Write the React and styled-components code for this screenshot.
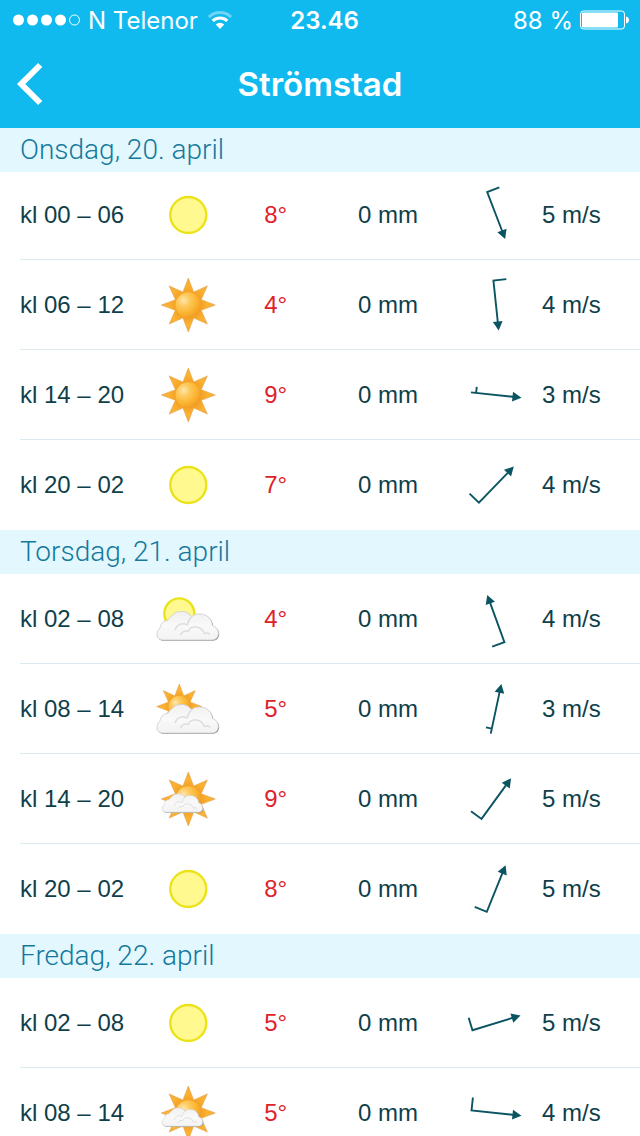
import React from 'react';
import styled, { createGlobalStyle } from 'styled-components';

const GlobalStyle = createGlobalStyle`
  html, body {
    margin: 0;
    background: #fff;
  }

  body {
    font-family: "Liberation Sans", Arial, sans-serif;
    color: #0f3f4a;
  }
`;

const Screen = styled.div`
  height: 100vh;
  display: flex;
  flex-direction: column;
`;

const Header = styled.header`
  flex: none;
  background: #10baef;
  color: #fff;
  font-family: Inter, sans-serif;
`;

const StatusBar = styled.div`
  display: grid;
  grid-template-columns: 45% 1fr auto;
  align-items: center;
  height: 40px;
  padding: 0 11px 0 13px;
  font-size: 24px;
  white-space: nowrap;
`;

const StatusGroup = styled.div`
  display: flex;
  align-items: center;
  gap: 7px;
  font-weight: ${({ $bold }) => ($bold ? 600 : 400)};
`;

const NavBar = styled.div`
  display: grid;
  grid-template-columns: 1fr auto 1fr;
  align-items: center;
  height: 88px;
`;

const BackButton = styled.button`
  justify-self: start;
  display: flex;
  padding: 16px;
  border: none;
  background: none;
  color: inherit;
  cursor: pointer;
`;

const Title = styled.h1`
  margin: 0;
  font-size: 33px;
  font-weight: 600;
`;

const Scroller = styled.main`
  flex: 1;
  min-height: 0;
  overflow-y: auto;
  scrollbar-width: none;
`;

/* the first day is tucked slightly under its sticky heading */
const DayList = styled.div`
  margin-top: -2px;
`;

const DayTitle = styled.h2`
  position: sticky;
  top: 0;
  z-index: 1;
  margin: 0;
  padding: 0 20px;
  background: #e3f7fe;
  color: #14799c;
  font-family: Roboto, sans-serif;
  font-size: 28px;
  font-weight: 300;
  line-height: 44px;
`;

const TableWrap = styled.div`
  padding-left: 20px;
`;

const Table = styled.table`
  width: 100%;
  table-layout: fixed;
  border-spacing: 0;
  font-size: 24px;
`;

const Col = styled.col`
  width: ${({ $width }) => $width};
`;

const Row = styled.tr`
  &:not(:last-child) > * {
    border-bottom: 1px solid #dce9ef;
  }
`;

const Cell = styled.td`
  box-sizing: border-box;
  height: 90px;
  padding: 0;
  color: ${({ $warm }) => ($warm ? '#e0222a' : 'inherit')};
  font-weight: normal;
  line-height: 30px;
  text-align: left;
  vertical-align: middle;
  white-space: nowrap;

  svg {
    display: block;
  }
`;

const SUN_POINTS = Array.from({ length: 16 }, (_, i) => {
  const radius = i % 2 ? 14 : 27;
  const angle = (i * Math.PI) / 8;
  return `${(radius * Math.sin(angle)).toFixed(2)},${(-radius * Math.cos(angle)).toFixed(2)}`;
}).join(' ');

const Gradients = () => (
  <svg width="0" height="0" style={{ position: 'absolute' }} aria-hidden="true">
    <defs>
      <radialGradient id="ball" cx="0.32" cy="0.32" r="0.75">
        <stop offset="0" stopColor="#fee6ae" />
        <stop offset="0.3" stopColor="#fdcb60" />
        <stop offset="0.7" stopColor="#fbb22e" />
        <stop offset="1" stopColor="#ee9a26" />
      </radialGradient>
      <radialGradient id="rays" gradientUnits="userSpaceOnUse" cx="0" cy="0" r="27">
        <stop offset="0.45" stopColor="#f3a024" />
        <stop offset="0.75" stopColor="#fbb432" />
        <stop offset="1" stopColor="#eda645" />
      </radialGradient>
      <linearGradient id="cloud" x1="0" y1="0" x2="0" y2="1">
        <stop offset="0" stopColor="#f0f0f0" />
        <stop offset="0.5" stopColor="#f9f9f9" />
        <stop offset="1" stopColor="#f3f3f3" />
      </linearGradient>
    </defs>
  </svg>
);

const Sun = () => (
  <>
    <polygon points={SUN_POINTS} fill="url(#rays)" stroke="#e5a24a" strokeWidth="0.6" />
    <circle r="12.8" fill="url(#ball)" />
  </>
);

const CLOUD_PATH =
  'M10 57C6.4 56.6 4.8 54 5 51C5.2 48 6.6 46.2 8 45C8.6 40.6 11.4 37.8 15.6 37.4C17.6 34.6 18.6 33.4 20.4 32.4C22.4 29.4 25.4 28.4 28 28.8C32.6 27.6 37 30 39.6 33.8C42 31.4 44.8 30.8 48 31C55 31.2 59.8 35.6 60.4 42.4C64.6 44 66.6 47.2 66.4 50.8C66 54.6 63.6 57 60 57Z';

const Cloud = () => (
  <g strokeLinecap="round" strokeLinejoin="round">
    <path d={CLOUD_PATH} fill="#8c8c8c" transform="translate(0.8 0.8)" />
    <path d={CLOUD_PATH} fill="url(#cloud)" stroke="#cdcdcd" strokeWidth="0.8" />
    <path
      d="M23.4 46.4C24.4 41.8 30.4 39 35.2 42M39.6 33.8C37.4 35.6 36 38 35.6 41M28.6 51.6C30.4 48.6 33.6 47.6 36.4 48.4C37.6 42.4 49.4 42 52.4 50.6C54.4 49.8 56.4 50 57.6 51"
      fill="none"
      stroke="#dddddd"
      strokeWidth="1.5"
    />
  </g>
);

const Disc = ({ r = 18 }) => (
  <circle r={r} fill="#fff98f" stroke="#ebe31a" strokeWidth="2.4" />
);

const skies = {
  clearNight: {
    label: 'Klart',
    drawing: <g transform="translate(36.3 36)"><Disc /></g>,
  },
  sunny: {
    label: 'Sol',
    drawing: <g transform="translate(36.3 36)"><Sun /></g>,
  },
  cloudyNight: {
    label: 'Delvis skyet',
    drawing: (
      <>
        <g transform="translate(27.3 30.4)"><Disc r={15} /></g>
        <Cloud />
      </>
    ),
  },
  cloudy: {
    label: 'Delvis skyet',
    drawing: (
      <g transform="translate(0 3)">
        <g transform="translate(27.3 30.6) scale(0.84)"><Sun /></g>
        <Cloud />
      </g>
    ),
  },
  fair: {
    label: 'Lettskyet',
    drawing: (
      <>
        <g transform="translate(36.3 36)"><Sun /></g>
        <g transform="translate(6.9 12.4) scale(0.66 0.645)"><Cloud /></g>
      </>
    ),
  },
};

const SkyIcon = ({ sky }) => (
  <svg width="72" height="72" viewBox="0 0 72 72" role="img" aria-label={skies[sky].label}>
    {skies[sky].drawing}
  </svg>
);

// Points up at 0 degrees. Light wind gets a short barb set in from the tail.
const WindArrow = ({ angle, speed }) => (
  <svg width="68" height="68" viewBox="0 0 68 68" aria-hidden="true">
    <g transform={`rotate(${angle} 34 34)`}>
      <path
        d={speed < 4 ? 'M34 59.2V15M34 54H28' : 'M34 15V58.6H21'}
        fill="none"
        stroke="#0b5562"
        strokeWidth="1.9"
      />
      <path d="M34 8.4L38.9 17.4H29.1Z" fill="#0b5562" />
    </g>
  </svg>
);

const Signal = () => (
  <svg width="68" height="12" viewBox="0 0 68 12" fill="#fff" aria-hidden="true">
    <circle cx="5.5" cy="6" r="5.5" />
    <circle cx="19.5" cy="6" r="5.5" />
    <circle cx="33.5" cy="6" r="5.5" />
    <circle cx="47.5" cy="6" r="5.5" />
    <circle cx="61.5" cy="6" r="5" fill="none" stroke="#fff" />
  </svg>
);

const Wifi = () => (
  <svg width="28" height="20" viewBox="-2 0 28 20" fill="none" stroke="#fff" strokeWidth="3" aria-hidden="true">
    <path d="M1.9 7.1A16 16 0 0 1 24.1 7.1" opacity="0.4" />
    <path d="M5.7 10.9A10.6 10.6 0 0 1 20.3 10.9" />
    <path d="M13 19L8.8 14.4A6.2 6.2 0 0 1 17.2 14.4Z" fill="#fff" stroke="none" />
  </svg>
);

const Battery = () => (
  <svg width="49" height="20" viewBox="0 0 49 20" fill="#fff" aria-hidden="true">
    <rect x="0.5" y="1" width="44" height="18" rx="3" fill="none" stroke="#fff" />
    <rect x="2" y="2.5" width="36" height="15" rx="1" />
    <path d="M46 6.5C48 7 49 8 49 10C49 12 48 13 46 13.5Z" />
  </svg>
);

const days = [
  {
    title: 'Onsdag, 20. april',
    hours: [
      { time: 'kl 00 – 06', sky: 'clearNight', temp: '8°', speed: 5, angle: 159 },
      { time: 'kl 06 – 12', sky: 'sunny', temp: '4°', speed: 4, angle: 174 },
      { time: 'kl 14 – 20', sky: 'sunny', temp: '9°', speed: 3, angle: 96 },
      { time: 'kl 20 – 02', sky: 'clearNight', temp: '7°', speed: 4, angle: 44 },
    ],
  },
  {
    title: 'Torsdag, 21. april',
    hours: [
      { time: 'kl 02 – 08', sky: 'cloudyNight', temp: '4°', speed: 4, angle: 340 },
      { time: 'kl 08 – 14', sky: 'cloudy', temp: '5°', speed: 3, angle: 12 },
      { time: 'kl 14 – 20', sky: 'fair', temp: '9°', speed: 5, angle: 36 },
      { time: 'kl 20 – 02', sky: 'clearNight', temp: '8°', speed: 5, angle: 22 },
    ],
  },
  {
    title: 'Fredag, 22. april',
    hours: [
      { time: 'kl 02 – 08', sky: 'clearNight', temp: '5°', speed: 5, angle: 73 },
      { time: 'kl 08 – 14', sky: 'fair', temp: '5°', speed: 4, angle: 96 },
    ],
  },
];

const columns = ['21.3%', '18.1%', '15.1%', '16.8%', '12.9%', '15.8%'];

const Day = ({ title, hours }) => (
  <section>
    <DayTitle>{title}</DayTitle>
    <TableWrap>
      <Table aria-label={title}>
        <colgroup>
          {columns.map((width, i) => (
            <Col key={i} $width={width} />
          ))}
        </colgroup>
        <tbody>
          {hours.map((hour) => (
            <Row key={hour.time}>
              <Cell as="th" scope="row">{hour.time}</Cell>
              <Cell><SkyIcon sky={hour.sky} /></Cell>
              <Cell $warm>{hour.temp}</Cell>
              <Cell>0 mm</Cell>
              <Cell><WindArrow angle={hour.angle} speed={hour.speed} /></Cell>
              <Cell>{hour.speed} m/s</Cell>
            </Row>
          ))}
        </tbody>
      </Table>
    </TableWrap>
  </section>
);

const App = () => (
  <Screen>
    <GlobalStyle />
    <Gradients />
    <Header>
      <StatusBar>
        <StatusGroup>
          <Signal />
          <span>N Telenor</span>
          <Wifi />
        </StatusGroup>
        <StatusGroup $bold>23.46</StatusGroup>
        <StatusGroup>
          <span>88 %</span>
          <Battery />
        </StatusGroup>
      </StatusBar>
      <NavBar>
        <BackButton type="button" aria-label="Tilbake">
          <svg width="28" height="44" viewBox="0 0 28 44" fill="none" stroke="#fff" strokeWidth="6">
            <path d="M24.2 3L5.2 22L24.2 41" />
          </svg>
        </BackButton>
        <Title>Strömstad</Title>
      </NavBar>
    </Header>
    <Scroller>
      <DayList>
        {days.map((day) => (
          <Day key={day.title} {...day} />
        ))}
      </DayList>
    </Scroller>
  </Screen>
);

export default App;
